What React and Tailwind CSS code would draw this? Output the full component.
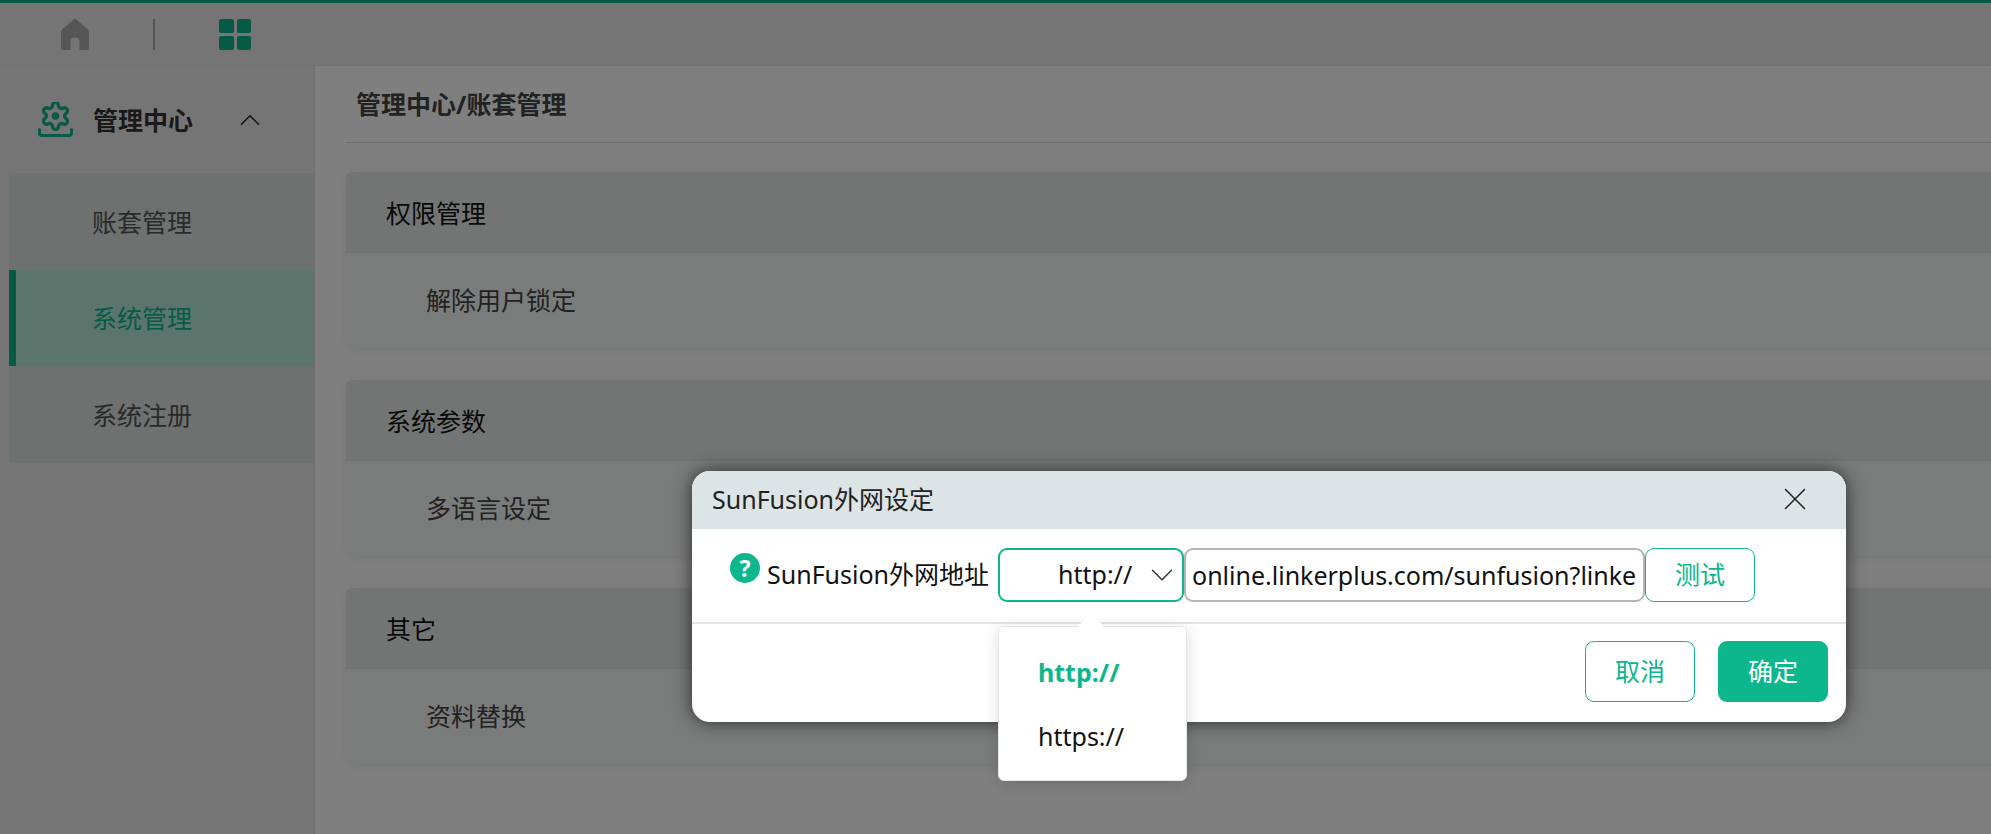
import { ChevronDown, ChevronUp, X } from "lucide-react";

const font = { fontFamily: '"Noto Sans", "Noto Sans CJK SC", sans-serif' };

function HomeIcon() {
  return (
    <svg viewBox="0 0 28 31" className="h-[31px] w-[28px]" fill="#acacac">
      <path d="M14 0 Q15 0 16 1 L26.5 10 Q28 11.4 28 13 V28.5 Q28 31 25.5 31 H18.5 V22 Q18.5 18.5 14 18.5 Q9.5 18.5 9.5 22 V31 H2.5 Q0 31 0 28.5 V13 Q0 11.4 1.5 10 L12 1 Q13 0 14 0 Z" />
    </svg>
  );
}

function GridIcon() {
  return (
    <div className="grid h-[31px] w-[32px] grid-cols-2 gap-[3px]">
      <span className="rounded-[2px] bg-[#0cb78c]" />
      <span className="rounded-[2px] bg-[#0cb78c]" />
      <span className="rounded-[2px] bg-[#0cb78c]" />
      <span className="rounded-[2px] bg-[#0cb78c]" />
    </div>
  );
}

function GearIcon() {
  return (
    <svg viewBox="0 0 35 35" className="h-[35px] w-[35px]" fill="none" stroke="#0cb78c" strokeLinejoin="round" strokeLinecap="round">
      <g transform="translate(17.5 14) scale(1.33) translate(-12 -12)" strokeWidth="2.5">
        <path d="M12.22 2h-.44a2 2 0 0 0-2 2v.18a2 2 0 0 1-1 1.73l-.43.25a2 2 0 0 1-2 0l-.15-.08a2 2 0 0 0-2.73.73l-.22.38a2 2 0 0 0 .73 2.73l.15.1a2 2 0 0 1 1 1.72v.51a2 2 0 0 1-1 1.74l-.15.09a2 2 0 0 0-.73 2.73l.22.38a2 2 0 0 0 2.73.73l.15-.08a2 2 0 0 1 2 0l.43.25a2 2 0 0 1 1 1.73V20a2 2 0 0 0 2 2h.44a2 2 0 0 0 2-2v-.18a2 2 0 0 1 1-1.73l.43-.25a2 2 0 0 1 2 0l.15.08a2 2 0 0 0 2.73-.73l.22-.39a2 2 0 0 0-.73-2.73l-.15-.08a2 2 0 0 1-1-1.74v-.5a2 2 0 0 1 1-1.74l.15-.09a2 2 0 0 0 .73-2.73l-.22-.38a2 2 0 0 0-2.73-.73l-.15.08a2 2 0 0 1-2 0l-.43-.25a2 2 0 0 1-1-1.73V4a2 2 0 0 0-2-2z" />
        <circle cx="12" cy="12" r="1.6" fill="#0cb78c" />
      </g>
      <path d="M1.5 27.5 V31 Q1.5 33.5 4 33.5 H31 Q33.5 33.5 33.5 31 V27.5" strokeWidth="3" />
    </svg>
  );
}

function QuestionIcon() {
  return (
    <span className="flex h-[30px] w-[30px] items-center justify-center rounded-full bg-[#0cb78c] text-[23px] leading-none font-bold text-white">
      ?
    </span>
  );
}

function Card({ title, item }) {
  return (
    <section className="rounded-l-[6px] bg-[#f5f8f7] shadow-[0_2px_10px_rgba(0,0,0,0.08)]">
      <div className="flex h-[81px] items-center rounded-tl-[6px] border-b border-[#e2e5e4] bg-[#e7eae9] pt-[4px] pl-[40px] text-[25px] text-[#111]">
        {title}
      </div>
      <div className="flex h-[95px] items-center pl-[80px] text-[25px] text-[#444]">{item}</div>
    </section>
  );
}

export default function App() {
  const menu = [
    { label: "账套管理" },
    { label: "系统管理", active: true },
    { label: "系统注册" },
  ];

  return (
    <div className="relative h-[834px] w-[1991px] overflow-hidden bg-white" style={font}>
      <header className="flex h-[66px] items-center gap-[64px] border-t-[3px] border-b border-t-[#0cb78c] border-b-[#e0e3e2] bg-[#e8ebe9] pl-[61px]">
        <HomeIcon />
        <span className="h-[31px] w-[2px] bg-[#acacac]" />
        <GridIcon />
      </header>

      <div className="flex h-[768px]">
        <aside className="w-[315px] shrink-0 border-r border-[#dcdfde] bg-[#e8ebe9]">
          <div className="flex h-[107px] items-center pl-[38px]">
            <GearIcon />
            <span className="mt-[2px] ml-[20px] text-[25px] font-bold text-[#333]">管理中心</span>
            <ChevronUp className="ml-[40px] text-[#222]" size={34} strokeWidth={1.1} />
          </div>
          <nav className="ml-[9px] bg-[#dbe2e0]">
            {menu.map((m) => (
              <div
                key={m.label}
                className={`flex h-[96.5px] items-center pt-[2px] text-[25px] ${
                  m.active
                    ? "border-l-[7px] border-[#0cb78c] bg-[#b6e8d8] pl-[76px] text-[#0cb78c]"
                    : "pl-[83px] text-[#555]"
                }`}
              >
                {m.label}
              </div>
            ))}
          </nav>
        </aside>

        <main className="flex-1 pl-[31px]">
          <div className="flex h-[77px] items-center border-b border-[#dcdcdc] pt-[2px] pl-[10px] text-[25px] font-bold text-[#444]">
            管理中心/账套管理
          </div>
          <div className="mt-[29px] -mr-[8px] flex flex-col gap-[32px]">
            <Card title="权限管理" item="解除用户锁定" />
            <Card title="系统参数" item="多语言设定" />
            <Card title="其它" item="资料替换" />
          </div>
        </main>
      </div>

      <div className="absolute inset-0 bg-black/50" />

      {/* dialog */}
      <div className="absolute top-[471px] left-[692px] w-[1154px] rounded-[18px] bg-white shadow-[0_0_18px_rgba(0,0,0,0.65)]">
        <div className="flex h-[58px] items-center justify-between rounded-t-[18px] bg-[#dce4e6] pr-[32px] pl-[20px] text-[25px] text-[#222]">
          <span>SunFusion外网设定</span>
          <X size={38} strokeWidth={1} className="-mt-[2px] text-[#222]" />
        </div>
        <div className="flex h-[95px] items-start border-b-2 border-[#e2e6ea] pt-[19px] pl-[38px] text-[25px] text-[#111]">
          <div className="mt-[5px]">
            <QuestionIcon />
          </div>
          <span className="mt-[4px] ml-[7px] w-[231px] leading-[44px]">SunFusion外网地址</span>
          <div className="flex h-[54px] w-[186px] items-center rounded-[9px] border-2 border-[#0cb78c] pl-[58px]">
            <span>http://</span>
            <ChevronDown size={38} strokeWidth={0.9} className="ml-[11px] text-[#333]" />
          </div>
          <input
            readOnly
            value="online.linkerplus.com/sunfusion?linkerplus"
            className="h-[54px] w-[461px] rounded-[9px] border-2 border-[#b5b5b5] px-[6px] text-[#111] outline-none"
          />
          <button className="h-[54px] w-[110px] rounded-[9px] border border-[#0cb78c] text-[#0cb78c]">测试</button>
        </div>
        <div className="flex h-[98px] items-start justify-end gap-[23px] pt-[17px] pr-[18px] text-[25px]">
          <button className="h-[61px] w-[110px] rounded-[9px] border border-[#0cb78c] text-[#0cb78c]">取消</button>
          <button className="h-[61px] w-[110px] rounded-[9px] bg-[#0cb78c] text-white">确定</button>
        </div>
      </div>

      {/* dropdown of the protocol select */}
      <div className="absolute top-[626px] left-[998px] h-[155px] w-[189px] rounded-[6px] border border-[#e4e7ed] bg-white text-[25px] shadow-[0_2px_16px_rgba(0,0,0,0.14)]">
        <span className="absolute -top-[10px] left-[83px] h-[18px] w-[18px] rotate-45 rounded-[2px] bg-white" />
        <div className="relative flex h-[64px] items-end pl-[39px] font-bold text-[#0cb78c]">http://</div>
        <div className="relative flex h-[64px] items-end pl-[39px] text-[#111]">https://</div>
      </div>
    </div>
  );
}
